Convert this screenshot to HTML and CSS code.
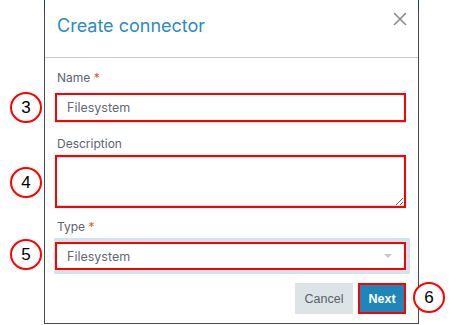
FILE: index.html
```html
<!DOCTYPE html>
<html lang="en">
<head>
  <meta charset="UTF-8" />
  <title>Create connector</title>
  <link rel="stylesheet" href="styles.css">
</head>
<body>
  <div class="page">
    <div class="dialog">
      <div class="dialog-header">
        <h2>Create connector</h2>
        <button class="close" aria-label="Close">
          <svg width="14" height="14" viewBox="0 0 14 14">
            <path d="M1 1 L13 13 M13 1 L1 13" stroke="#8a8a8a" stroke-width="1.6" fill="none"/>
          </svg>
        </button>
      </div>

      <form class="dialog-body">
        <div class="field field-name">
          <label>Name <span class="req">*</span></label>
          <input type="text" value="Filesystem" />
        </div>
        <div class="field field-desc">
          <label>Description</label>
          <textarea></textarea>
        </div>
        <div class="field field-type">
          <label>Type <span class="req">*</span></label>
          <div class="select-wrap">
            <div class="select">
              <span>Filesystem</span>
              <span class="caret"></span>
            </div>
          </div>
        </div>
        <div class="actions">
          <button type="button" class="btn btn-cancel">Cancel</button>
          <button type="button" class="btn btn-next">Next</button>
        </div>
      </form>
    </div>

    <span class="marker m3">3</span>
    <span class="marker m4">4</span>
    <span class="marker m5">5</span>
    <span class="marker m6">6</span>
  </div>
</body>
</html>
```

FILE: styles.css
```css
* {
  box-sizing: border-box;
}

body {
  margin: 0;
  background: #fff;
  font-family: Inter, 'Liberation Sans', sans-serif;
  color: #333;
}

.page {
  position: relative;
  height: 325px;
  padding-left: 44px;
}

.dialog {
  width: 375px;
  height: 324px;
  border-left: 1px solid #4a4a4a;
  border-right: 1px solid #4a4a4a;
  border-bottom: 1px solid #4a4a4a;
  border-image: linear-gradient(to bottom, #17475a 12px, #4a4a4a 12px) 1;
  background: #fff;
}

.dialog-header {
  display: flex;
  justify-content: space-between;
  align-items: flex-start;
  height: 58px;
  padding: 12px 11px 0 12px;
  border-bottom: 1px solid #cbcbcb;
}

.dialog-header h2 {
  margin: 1px 0 0;
  font-size: 18px;
  font-weight: 400;
  line-height: 26px;
  color: #2b8bc2;
}

.close {
  background: none;
  border: none;
  padding: 0;
  width: 14px;
  height: 14px;
  cursor: pointer;
}

.dialog-body {
  padding: 12px 12px 0 10px;
}

.field label {
  display: block;
  padding-left: 2px;
  font-size: 12px;
  line-height: 16px;
  color: #5b6470;
}

.req {
  color: #e2572c;
}

.field-name {
  margin-bottom: 14px;
}

.field-name label {
  margin-bottom: 7px;
}

.field input {
  display: block;
  width: 100%;
  height: 29px;
  padding: 0 10px;
  border: 2px solid #f00;
  box-shadow: 0 1px 0 #dcdcdc;
  font-family: Inter, sans-serif;
  font-size: 12.5px;
  color: #5f6973;
  outline: none;
}

.field-desc {
  margin-bottom: 11px;
}

.field-desc label {
  margin-bottom: 3px;
}

.field textarea {
  display: block;
  width: 100%;
  height: 53px;
  border: 2px solid #f00;
  box-shadow: inset 0 1px 0 #dcdcdc, inset 0 -1px 0 #dcdcdc;
  resize: vertical;
  outline: none;
}

.field-type label {
  margin-bottom: 3px;
}

.select-wrap {
  margin: 0 -4px 0 -1px;
  padding: 4px 4px 4px 1px;
  background: #d1e3eb;
}

.select {
  display: flex;
  justify-content: space-between;
  align-items: center;
  height: 28px;
  padding: 0 12px 0 10px;
  border: 2px solid #f00;
  background: #fff;
  font-size: 12.5px;
  color: #5f6973;
}

.caret {
  width: 0;
  height: 0;
  border-left: 4px solid transparent;
  border-right: 4px solid transparent;
  border-top: 4px solid #c8c8c8;
}

.actions {
  display: flex;
  justify-content: flex-end;
  gap: 5px;
  margin-top: 9px;
}

.btn {
  height: 31px;
  border: none;
  font-family: 'Liberation Sans', Arial, sans-serif;
  font-size: 12.5px;
  cursor: pointer;
}

.btn-cancel {
  width: 58px;
  background: #dde4e7;
  color: #5a5f66;
}

.btn-next {
  width: 48px;
  background: #1f86b9;
  border: 2px solid #f00;
  color: #fff;
  font-weight: bold;
}

.marker {
  position: absolute;
  width: 32px;
  height: 31px;
  border: 2px solid #f00;
  border-radius: 50%;
  background: #fff;
  font-family: 'Liberation Sans', Arial, sans-serif;
  font-size: 17px;
  line-height: 27px;
  text-align: center;
  color: #000;
}

.m3 { left: 10px; top: 92px; }
.m4 { left: 10px; top: 167px; }
.m5 { left: 10px; top: 239px; }
.m6 { left: 413px; top: 282px; }
```
